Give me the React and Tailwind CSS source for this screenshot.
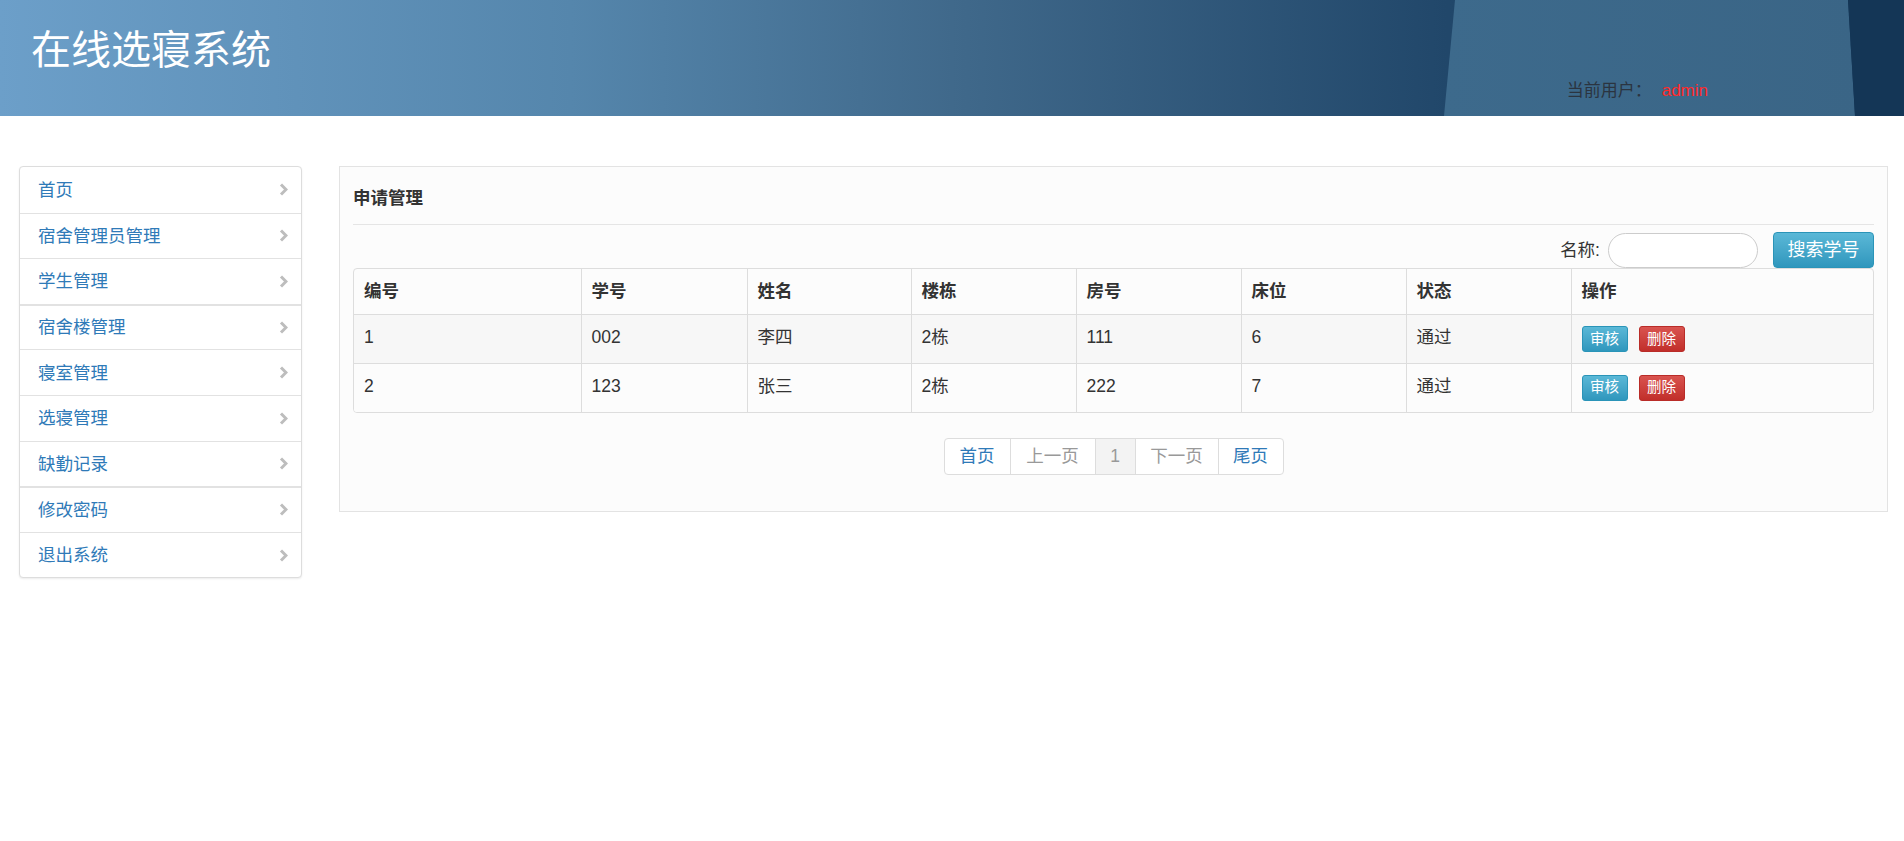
const menu = [
  { label: "首页" },
  { label: "宿舍管理员管理" },
  { label: "学生管理" },
  { label: "宿舍楼管理", split: true },
  { label: "寝室管理" },
  { label: "选寝管理" },
  { label: "缺勤记录" },
  { label: "修改密码", split: true },
  { label: "退出系统" },
];

const cols = [
  { label: "编号", w: "w-[227px]" },
  { label: "学号", w: "w-[166px]" },
  { label: "姓名", w: "w-[164px]" },
  { label: "楼栋", w: "w-[165px]" },
  { label: "房号", w: "w-[165px]" },
  { label: "床位", w: "w-[165px]" },
  { label: "状态", w: "w-[165px]" },
  { label: "操作", w: "" },
];

const rows = [
  { id: 1, no: "002", name: "李四", building: "2栋", room: "111", bed: "6", status: "通过" },
  { id: 2, no: "123", name: "张三", building: "2栋", room: "222", bed: "7", status: "通过" },
];

function Chevron() {
  return (
    <svg width="9" height="13" viewBox="0 0 9 13" className="shrink-0">
      <polyline points="2,1.5 7,6.5 2,11.5" fill="none" stroke="#bdbdbd" strokeWidth="3" />
    </svg>
  );
}

function HeaderArt() {
  return (
    <svg className="absolute inset-0 w-full h-full" viewBox="0 0 1904 116" preserveAspectRatio="none">
      <defs>
        <linearGradient id="hdr" x1="0" y1="0" x2="1" y2="0">
          <stop offset="0" stopColor="#6c9fc9" />
          <stop offset="0.3" stopColor="#5586ac" />
          <stop offset="0.5" stopColor="#40698b" />
          <stop offset="0.76" stopColor="#21476a" />
          <stop offset="1" stopColor="#163858" />
        </linearGradient>
        <linearGradient id="pane" x1="0" y1="0" x2="1" y2="0">
          <stop offset="0" stopColor="#3d6a8c" />
          <stop offset="1" stopColor="#3a6586" />
        </linearGradient>
      </defs>
      <rect x="0" y="0" width="1904" height="116" fill="url(#hdr)" />
      <polygon points="1455,0 1848,0 1855,116 1444,116" fill="url(#pane)" />
      <polygon points="1848,0 1904,0 1904,116 1855,116" fill="#143656" />
    </svg>
  );
}

export default function App() {
  return (
    <div
      className="min-h-screen bg-white text-[#333] text-[17.5px]"
      style={{ fontFamily: '"Liberation Sans", "Noto Sans CJK SC", sans-serif' }}
    >
      {/* Header */}
      <header className="relative h-[116px] overflow-hidden">
        <HeaderArt />
        <div className="relative h-full flex justify-between pl-[31px] pr-[196px]">
          <h1 className="pt-[28px] text-[40px] leading-[44px] text-white font-normal">在线选寝系统</h1>
          <div className="self-end pb-[13px] text-[17px] leading-[24px]">
            <span className="text-[#2b3440]">当前用户：</span>
            <span className="ml-[10px] text-[#ff2a2a]">admin</span>
          </div>
        </div>
      </header>

      <div className="flex items-start pt-[50px] pl-[19px] pr-[16px] gap-[37px]">
        {/* Sidebar */}
        <aside className="w-[283px] shrink-0 bg-white border border-[#ddd] rounded-[4px] shadow-[0_1px_2px_rgba(0,0,0,0.08)]">
          {menu.map((m, i) => (
            <div
              key={m.label}
              className={
                "h-[45.6px] flex items-center justify-between pl-[18px] pr-[13px] text-[#2f7ab8] " +
                (i === 0 ? "" : m.split ? "border-t-2 border-[#e2e2e2]" : "border-t border-[#e2e2e2]")
              }
            >
              <span>{m.label}</span>
              <Chevron />
            </div>
          ))}
        </aside>

        {/* Main panel */}
        <main className="flex-1 bg-[#fcfcfc] border border-[#e3e3e3] px-[13px] pb-[36px]">
          <h2 className="pt-[19px] pb-[13px] border-b border-[#e5e5e5] font-bold text-[17.5px] leading-[25px] text-[#333]">
            申请管理
          </h2>

          <div className="flex items-center justify-end mt-[7px] h-[36px]">
            <span className="mr-[8px]">名称:</span>
            <input className="w-[150px] h-[35px] rounded-full border border-[#ccc] bg-white px-3 outline-none" />
            <button className="ml-[15px] w-[101px] h-[36px] rounded-[4px] border border-[#2a94b8] bg-gradient-to-b from-[#5ab8d7] to-[#2f97bd] text-white text-[18px]">
              搜索学号
            </button>
          </div>

          <div className="border border-[#ddd] rounded-[4px] overflow-hidden">
            <table className="w-full table-fixed border-collapse">
              <thead>
                <tr className="h-[45px]">
                  {cols.map((c, i) => (
                    <th
                      key={c.label}
                      className={"text-left align-top px-[10px] py-[10px] leading-[25px] font-bold " + c.w + (i ? " border-l border-[#ddd]" : "")}
                    >
                      {c.label}
                    </th>
                  ))}
                </tr>
              </thead>
              <tbody>
                {rows.map((r, ri) => (
                  <tr key={r.id} className={"h-[48.5px] " + (ri % 2 === 0 ? "bg-[#f7f7f7]" : "bg-[#fcfcfc]")}>
                    {[r.id, r.no, r.name, r.building, r.room, r.bed, r.status].map((v, i) => (
                      <td
                        key={i}
                        className={"align-top px-[10px] pt-[10px] leading-[25px] border-t border-[#ddd]" + (i ? " border-l" : "")}
                      >
                        {v}
                      </td>
                    ))}
                    <td className="align-top px-[10px] pt-[11px] border-t border-l border-[#ddd]">
                      <div className="flex gap-[11px]">
                        <button className="w-[46px] h-[26px] rounded-[3px] border border-[#2a94b8] bg-gradient-to-b from-[#5ab8d7] to-[#2f97bd] text-white text-[14.5px] leading-none">
                          审核
                        </button>
                        <button className="w-[46px] h-[26px] rounded-[3px] border border-[#b92c28] bg-gradient-to-b from-[#d9534f] to-[#c12e2a] text-white text-[14.5px] leading-none">
                          删除
                        </button>
                      </div>
                    </td>
                  </tr>
                ))}
              </tbody>
            </table>
          </div>

          {/* Pagination */}
          <div className="flex justify-center mt-[25px]">
            <div className="flex h-[37px] border border-[#ddd] rounded-[4px] overflow-hidden bg-white">
              <span className="w-[65px] flex items-center justify-center text-[#2f7ab8]">首页</span>
              <span className="w-[85px] flex items-center justify-center text-[#999] border-l border-[#ddd]">上一页</span>
              <span className="w-[40px] flex items-center justify-center text-[#999] bg-[#f3f3f3] border-l border-[#ddd]">1</span>
              <span className="w-[83px] flex items-center justify-center text-[#999] border-l border-[#ddd]">下一页</span>
              <span className="w-[65px] flex items-center justify-center text-[#2f7ab8] border-l border-[#ddd]">尾页</span>
            </div>
          </div>
        </main>
      </div>
    </div>
  );
}
